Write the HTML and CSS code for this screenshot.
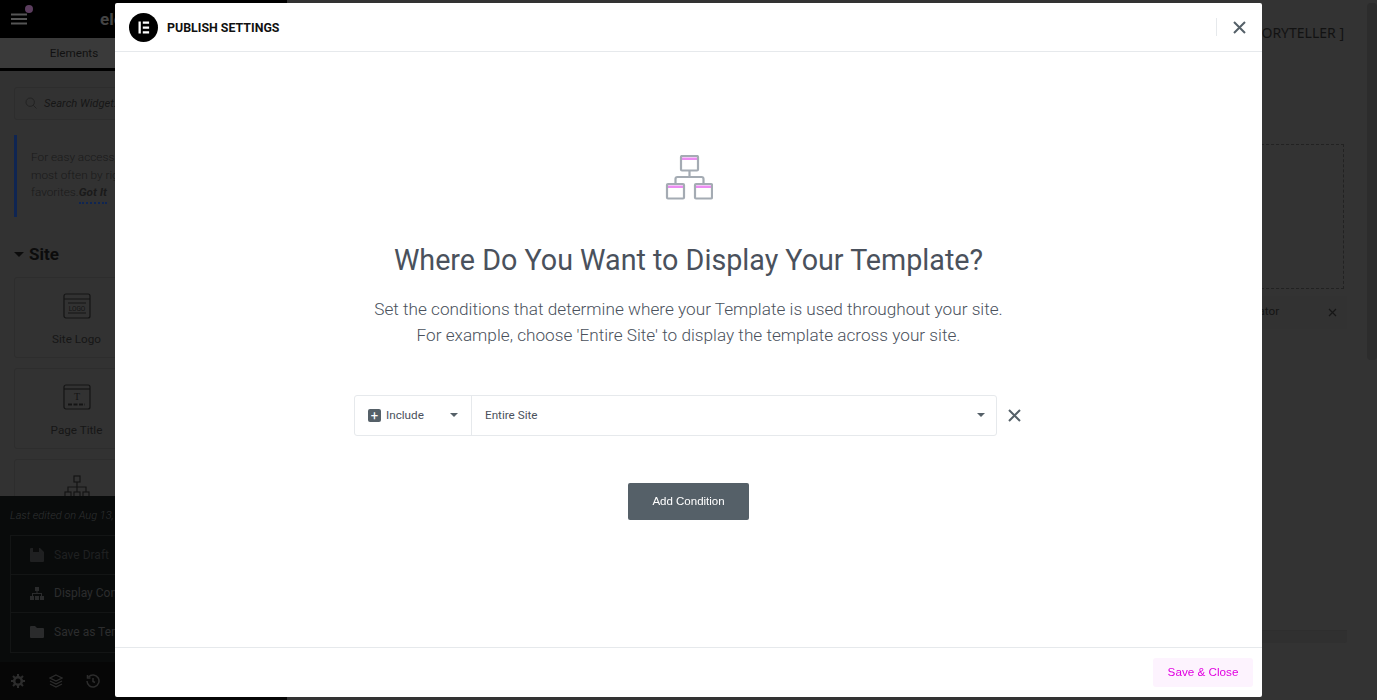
FILE: index.html
```html
<!DOCTYPE html>
<html lang="en">
<head>
    <meta charset="UTF-8">
    <meta name="viewport" content="width=device-width, initial-scale=1.0">
    <title>Publish Settings</title>
    <link rel="stylesheet" href="styles.css">
</head>
<body>
    <div class="editor">
        <!-- Left widgets panel -->
        <aside class="sidebar">
            <div class="sidebar-top">
                <span class="menu-btn">
                    <svg width="18" height="12" viewBox="0 0 18 12"><path d="M1 1.5h16M1 6h16M1 10.5h16" stroke="#555" stroke-width="2"/></svg>
                    <i class="menu-dot"></i>
                </span>
                <span class="brand">elementor</span>
            </div>
            <div class="tabs">
                <span class="tab">Elements</span>
                <span class="tab">Globals</span>
            </div>
            <div class="search">
                <svg width="12" height="12" viewBox="0 0 12 12" fill="none" stroke="#222" stroke-width="1"><circle cx="5.2" cy="5.2" r="4.2"/><path d="M8.3 8.3L11.5 11.5"/></svg>
                <span>Search Widget...</span>
            </div>
            <div class="note">
                For easy access, favorite the<br>most often by right clicking<br>favorites.<b class="got-it">Got It</b>
            </div>
            <h3 class="section-title"><i class="caret"></i>Site</h3>
            <div class="widgets">
                <div class="widget">
                    <svg width="28" height="26" viewBox="0 0 28 26" fill="none" stroke="#141414" stroke-width="1.2"><rect x="1" y="1" width="26" height="24" rx="2"/><path d="M1 6h26M5 10h18M5 20h18"/><text x="14" y="17.5" font-size="6.5" text-anchor="middle" fill="#141414" stroke="none" font-family="Roboto, sans-serif">LOGO</text></svg>
                    <span>Site Logo</span>
                </div>
                <div class="widget">
                    <svg width="28" height="26" viewBox="0 0 28 26" fill="none" stroke="#141414" stroke-width="1.2"><rect x="1" y="1" width="26" height="24" rx="2"/><path d="M1 5h26"/><text x="14" y="16" font-size="10" text-anchor="middle" fill="#141414" stroke="none" font-family="Liberation Serif, serif">T</text><path d="M5 20.5h17" stroke-width="2" stroke-dasharray="4 1.5"/></svg>
                    <span>Site Title</span>
                </div>
                <div class="widget">
                    <svg width="28" height="26" viewBox="0 0 28 26" fill="none" stroke="#141414" stroke-width="1.2"><rect x="1" y="1" width="26" height="24" rx="2"/><path d="M1 5h26"/><text x="14" y="16" font-size="10" text-anchor="middle" fill="#141414" stroke="none" font-family="Liberation Serif, serif">T</text><path d="M5 20.5h17" stroke-width="2" stroke-dasharray="4 1.5"/></svg>
                    <span>Page Title</span>
                </div>
                <div class="widget">
                    <span>Nav Menu</span>
                </div>
                <div class="widget widget-cut">
                    <svg width="26" height="26" viewBox="0 0 26 26" fill="none" stroke="#141414" stroke-width="1.2"><rect x="10" y="1" width="6" height="6"/><path d="M13 7v5M4 17v-5h18v5M13 12v5"/><rect x="1" y="17" width="6" height="6"/><rect x="10" y="17" width="6" height="6"/><rect x="19" y="17" width="6" height="6"/></svg>
                </div>
            </div>

            <!-- Publish options popup -->
            <div class="publish-menu">
                <p class="last-edited">Last edited on Aug 13, 2021</p>
                <div class="publish-list">
                    <div class="publish-item muted">
                        <svg width="14" height="14" viewBox="0 0 14 14"><path d="M1 0h9l4 4v9a1 1 0 0 1-1 1H1a1 1 0 0 1-1-1V1a1 1 0 0 1 1-1z" fill="#1f2021"/><rect x="3" y="0" width="6" height="4" fill="#0a0b0b"/></svg>
                        Save Draft
                    </div>
                    <div class="publish-item">
                        <svg width="14" height="13" viewBox="0 0 14 13" fill="#2a2b2c"><rect x="5" y="0" width="4" height="4"/><rect x="0" y="9" width="4" height="4"/><rect x="5" y="9" width="4" height="4"/><rect x="10" y="9" width="4" height="4"/><path d="M6.5 4h1v2H12v3h-1V7H3v2H2V6h4.500z"/></svg>
                        Display Conditions
                    </div>
                    <div class="publish-item">
                        <svg width="14" height="12" viewBox="0 0 14 12"><path d="M1 0h4l2 2h6a1 1 0 0 1 1 1v8a1 1 0 0 1-1 1H1a1 1 0 0 1-1-1V1a1 1 0 0 1 1-1z" fill="#2a2b2c"/></svg>
                        Save as Template
                    </div>
                </div>
            </div>

            <div class="sidebar-footer">
                <svg width="14" height="14" viewBox="0 0 14 14"><circle cx="7" cy="7" r="3.800" fill="none" stroke="#2c2c2c" stroke-width="2.600"/><path d="M7 0v3M7 11v3M0 7h3M11 7h3M2 2l2 2M10 10l2 2M12 2l-2 2M4 10l-2 2" stroke="#2c2c2c" stroke-width="2"/></svg>
                <svg width="14" height="14" viewBox="0 0 14 14" fill="none" stroke="#2c2c2c" stroke-width="1.300"><path d="M7 1l6 3-6 3-6-3zM1 7l6 3 6-3M1 10l6 3 6-3"/></svg>
                <svg width="14" height="14" viewBox="0 0 14 14" fill="none" stroke="#2c2c2c" stroke-width="1.500"><path d="M2.500 3A6 6 0 1 1 1 7"/><path d="M1.500 1v3h3"/><path d="M7 4v3.500l2 1"/></svg>
            </div>
        </aside>

        <!-- Page preview behind the dialog -->
        <main class="preview">
            <div class="site-title">[ STORYTELLER ]</div>
            <div class="drop-area"></div>
            <div class="navigator">
                <div class="navigator-head">
                    <span>Navigator</span>
                    <svg class="navigator-close" width="9" height="9" viewBox="0 0 9 9"><path d="M1 1l7 7M8 1L1 8" stroke="#161616" stroke-width="1.200"/></svg>
                </div>
                <div class="navigator-body"></div>
                <div class="navigator-foot"></div>
            </div>
        </main>
        <div class="scroll-track"><div class="scroll-thumb"></div></div>
    </div>

    <!-- Modal for publish settings -->
    <div class="modal">
        <header class="modal-header">
            <svg class="modal-logo" width="29" height="29" viewBox="0 0 29 29"><circle cx="14.500" cy="14.500" r="14.500" fill="#000"/><path d="M9.500 8.500h2.300v12H9.500zM13.800 8.500h6.300v2.300h-6.300zM13.800 13.400h6.300v2.300h-6.300zM13.800 18.200h6.300v2.300h-6.300z" fill="#fff"/></svg>
            <span class="modal-title">Publish Settings</span>
            <span class="modal-close">
                <svg width="13" height="13" viewBox="0 0 13 13"><path d="M1 1l11 11M12 1L1 12" stroke="#556068" stroke-width="2"/></svg>
            </span>
        </header>

        <div class="modal-body">
            <svg class="conditions-icon" width="49" height="45" viewBox="664 155 49 45" fill="none">
                <path d="M681 157.500h17v2.500h-17zM667 185.500h17v2.500h-17zM695 185.500h17v2.500h-17z" fill="#ec8cf2"/>
                <g stroke="#a4abb3" stroke-width="2.200">
                    <rect x="681" y="156" width="17" height="14.500" rx="1"/>
                    <rect x="667" y="184" width="17" height="14.500" rx="1"/>
                    <rect x="695" y="184" width="17" height="14.500" rx="1"/>
                    <path d="M689.500 170.500v6.500M675.500 184v-5a2 2 0 0 1 2-2h24a2 2 0 0 1 2 2v5"/>
                </g>
            </svg>
            <h2 class="modal-heading">Where Do You Want to Display Your Template?</h2>
            <p class="modal-text">Set the conditions that determine where your Template is used throughout your site.<br>For example, choose 'Entire Site' to display the template across your site.</p>

            <div class="condition">
                <div class="condition-row">
                    <div class="condition-type">
                        <i class="plus-box">+</i>
                        <span>Include</span>
                        <i class="select-caret"></i>
                    </div>
                    <div class="condition-value">
                        <span>Entire Site</span>
                        <i class="select-caret"></i>
                    </div>
                </div>
                <svg class="condition-remove" width="13" height="13" viewBox="0 0 13 13"><path d="M1 1l11 11M12 1L1 12" stroke="#556068" stroke-width="2"/></svg>
            </div>

            <button class="add-btn">Add Condition</button>
        </div>

        <footer class="modal-footer">
            <button class="save-btn">Save &amp; Close</button>
        </footer>
    </div>
</body>
</html>
```

FILE: styles.css
```css
* {
    box-sizing: border-box;
}
html, body {
    height: 100%;
}
body {
    margin: 0;
    background: #333;
    font-family: Roboto, sans-serif;
    overflow: hidden;
}
.editor {
    display: flex;
    height: 700px;
}

/* Sidebar */
.sidebar {
    position: relative;
    width: 287px;
    height: 700px;
    background: #323232;
    overflow: hidden;
    flex-shrink: 0;
}
.sidebar-top {
    height: 38px;
    background: #000;
    display: flex;
    align-items: center;
    padding-left: 10px;
    gap: 72px;
}
.menu-btn {
    position: relative;
    display: flex;
}
.menu-dot {
    position: absolute;
    left: 15px;
    top: -8px;
    width: 8px;
    height: 8px;
    border-radius: 50%;
    background: #5b3d5e;
}
.brand {
    color: #444;
    font-size: 17px;
    font-weight: 700;
}
.tabs {
    display: flex;
    height: 33px;
    background: #3a3a3a;
    border-bottom: 3px solid #000;
}
.tab {
    width: 148px;
    flex-shrink: 0;
    text-align: center;
    font-size: 11.700px;
    line-height: 31px;
    color: #111;
}
.search {
    display: flex;
    align-items: center;
    gap: 7px;
    height: 33px;
    margin: 16px 14px 0;
    padding: 0 0 1px 10px;
    border: 1px solid #2d2d2d;
    border-radius: 3px;
    font-size: 11.200px;
    font-style: italic;
    color: #161616;
}
.note {
    height: 82px;
    margin: 15px 14px 0;
    padding: 14px 14px;
    border-left: 3px solid #0f2552;
    font-size: 11.800px;
    font-weight: 300;
    line-height: 17.500px;
    color: #1a1a1a;
}
.got-it {
    font-style: italic;
    font-weight: 700;
    border-bottom: 2px dotted #0f2552;
    padding-bottom: 3px;
}
.section-title {
    margin: 28px 14px 0;
    height: 18px;
    display: flex;
    align-items: center;
    gap: 5px;
    font-size: 17px;
    font-weight: 700;
    color: #0c0c0c;
}
.caret {
    width: 0;
    height: 0;
    border-left: 5px solid transparent;
    border-right: 5px solid transparent;
    border-top: 5px solid #0c0c0c;
}
.widgets {
    display: grid;
    grid-template-columns: 125px 125px;
    grid-auto-rows: 81px;
    gap: 10px 9px;
    margin: 14px 14px 0;
}
.widget {
    display: flex;
    flex-direction: column;
    align-items: center;
    justify-content: center;
    gap: 13px;
    border: 1px solid #2d2d2d;
    border-radius: 3px;
    font-size: 11.700px;
    color: #161616;
    padding-top: 3px;
}
.widget-cut {
    justify-content: flex-start;
    padding-top: 15px;
}
.publish-menu {
    position: absolute;
    left: 0;
    right: 0;
    top: 496px;
    height: 166px;
    padding: 12px 10px 0;
    background: #090b0b;
}
.last-edited {
    margin: 0 0 11px;
    font-size: 11px;
    font-style: italic;
    font-weight: 300;
    line-height: 16px;
    color: #2f3132;
}
.publish-list {
    border: 1px solid #131515;
}
.publish-item {
    display: flex;
    align-items: center;
    gap: 10px;
    height: 38.500px;
    padding-left: 19px;
    font-size: 12px;
    color: #2c2d2e;
    border-bottom: 1px solid #131515;
}
.publish-item:last-child {
    border-bottom: 0;
}
.publish-item.muted {
    color: #1f2021;
}
.sidebar-footer {
    position: absolute;
    left: 0;
    right: 0;
    bottom: 0;
    height: 38px;
    background: #060606;
    display: flex;
    align-items: center;
    gap: 23.500px;
    padding-left: 11px;
}

/* Page preview */
.preview {
    position: relative;
    flex: 1;
    padding: 24px 23px 0 0;
}
.site-title {
    text-align: right;
    font-family: "Noto Sans", sans-serif;
    font-size: 14px;
    line-height: 18px;
    color: #121212;
}
.drop-area {
    height: 145px;
    margin-top: 102px;
    border: 1px dashed #222;
}
.navigator {
    position: absolute;
    right: 20px;
    top: 296px;
    width: 196px;
    height: 347px;
    display: flex;
    flex-direction: column;
    background: #303030;
    border-radius: 3px;
}
.navigator-head {
    position: relative;
    height: 33px;
    padding-left: 10px;
    font-size: 11.700px;
    line-height: 31px;
    color: #141414;
    background: #323232;
    text-align: center;
}
.navigator-close {
    position: absolute;
    right: 10px;
    top: 12px;
}
.navigator-body {
    flex: 1;
    background: #333;
}
.navigator-foot {
    height: 13px;
    border-top: 1px solid #2e2e2e;
}
.scroll-track {
    width: 10px;
    padding-top: 3px;
    flex-shrink: 0;
}
.scroll-thumb {
    height: 357px;
    background: #2c2c2c;
    border-radius: 4px;
}

/* Modal */
.modal {
    position: fixed;
    left: 115px;
    top: 3px;
    width: 1147px;
    height: 694px;
    display: flex;
    flex-direction: column;
    background: #fff;
    border-radius: 2px;
}
.modal-header {
    display: flex;
    align-items: center;
    height: 49px;
    padding: 0 14px;
    border-bottom: 1px solid #e6e9ec;
}
.modal-logo {
    flex-shrink: 0;
}
.modal-title {
    margin-left: 9px;
    padding-top: 1px;
    font-size: 12.400px;
    font-weight: 700;
    text-transform: uppercase;
    color: #111;
}
.modal-close {
    display: flex;
    align-items: center;
    height: 18px;
    margin-left: auto;
    padding: 0 2px 0 16px;
    border-left: 1px solid #e6e9ec;
}
.modal-body {
    flex: 1;
    display: flex;
    flex-direction: column;
    align-items: center;
    padding-top: 103px;
}
.conditions-icon {
    display: block;
}
.modal-heading {
    margin: 43px 0 0;
    font-size: 28.700px;
    font-weight: 400;
    line-height: 34px;
    color: #4a515c;
}
.modal-text {
    margin: 19px 0 0;
    font-size: 17.200px;
    font-weight: 300;
    line-height: 26px;
    text-align: center;
    color: #4a515c;
}
.condition {
    display: flex;
    align-items: center;
    gap: 11px;
    margin-top: 47px;
    padding-right: 2px;
}
.condition-row {
    display: flex;
    width: 643px;
    height: 41px;
    padding-bottom: 1px;
    border: 1px solid #e6e9ec;
    border-radius: 3px;
    font-size: 11.700px;
    color: #4a515c;
}
.condition-type {
    display: flex;
    align-items: center;
    width: 117px;
    padding: 0 13px;
    margin-bottom: -1px;
    padding-bottom: 1px;
    border-right: 1px solid #e6e9ec;
}
.plus-box {
    width: 13px;
    height: 13px;
    margin-right: 5px;
    border-radius: 2px;
    background: #556068;
    color: #fff;
    font-style: normal;
    font-size: 13px;
    line-height: 13px;
    text-align: center;
}
.condition-value {
    flex: 1;
    display: flex;
    align-items: center;
    padding: 0 11px 0 13px;
}
.select-caret {
    width: 0;
    height: 0;
    margin-left: auto;
    border-left: 4px solid transparent;
    border-right: 4px solid transparent;
    border-top: 4px solid #556068;
}
.condition-remove {
    display: block;
    margin-bottom: 1px;
}
.add-btn {
    width: 121px;
    height: 37px;
    margin-top: 47px;
    padding: 0 0 2px;
    border: none;
    border-radius: 2px;
    background: #556068;
    color: #fff;
    font-family: "Liberation Sans", sans-serif;
    font-size: 11.500px;
}
.modal-footer {
    display: flex;
    justify-content: flex-end;
    align-items: center;
    height: 50px;
    padding-right: 9px;
    border-top: 1px solid #e6e9ec;
}
.save-btn {
    width: 100px;
    height: 29px;
    padding: 0 0 2px;
    border: none;
    border-radius: 3px;
    background: #fdf3fe;
    color: #e100e1;
    font-family: "Liberation Sans", sans-serif;
    font-size: 11.700px;
}
```
